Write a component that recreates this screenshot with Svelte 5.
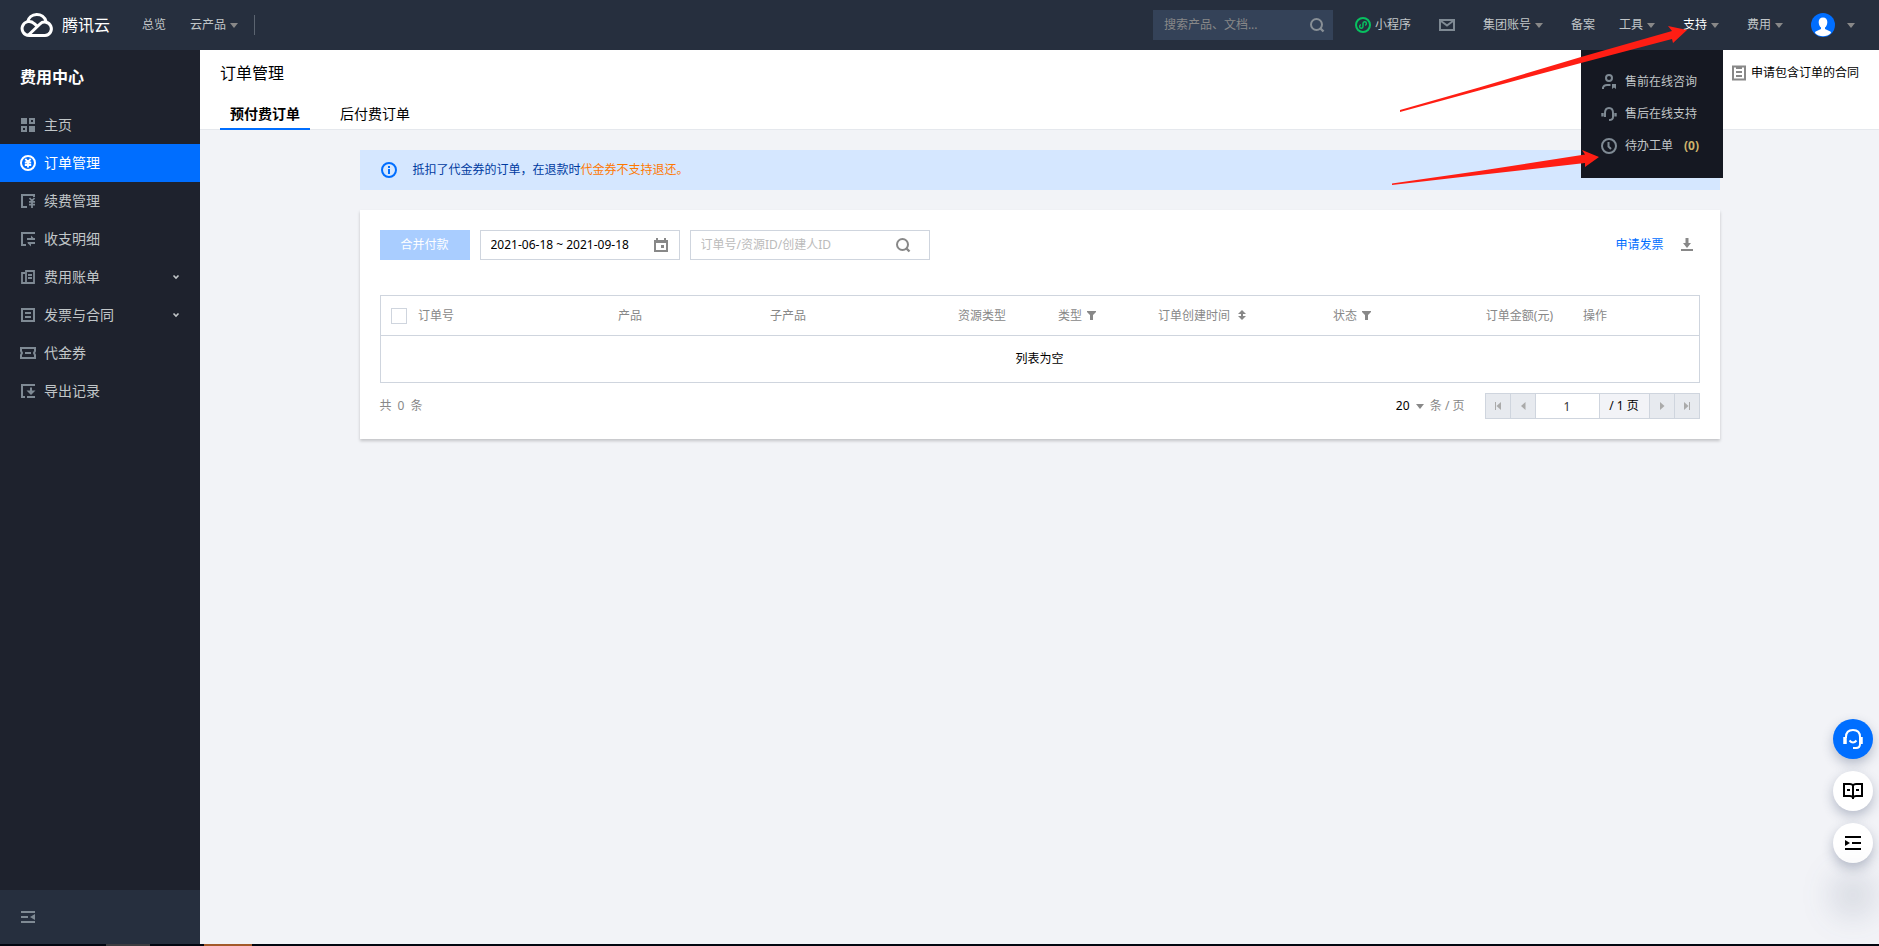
<script>
  let keyword = $state('');
  let orderQuery = $state('');
  let dateRange = $state('2021-06-18 ~ 2021-09-18');
  let page = $state('1');
  let pageSize = $state('20');
  let allChecked = $state(false);

  const menu = [
    { icon: 'home', label: '主页' },
    { icon: 'order', label: '订单管理', active: true },
    { icon: 'renew', label: '续费管理' },
    { icon: 'detail', label: '收支明细' },
    { icon: 'bill', label: '费用账单', expandable: true },
    { icon: 'invoice', label: '发票与合同', expandable: true },
    { icon: 'coupon', label: '代金券' },
    { icon: 'export', label: '导出记录' }
  ];

  const support = [
    { icon: 'person', label: '售前在线咨询' },
    { icon: 'headset', label: '售后在线支持' },
    { icon: 'clock', label: '待办工单', count: '(0)' }
  ];

  const columns = [
    { label: '订单号', width: 200 },
    { label: '产品', width: 152 },
    { label: '子产品', width: 188 },
    { label: '资源类型', width: 100 },
    { label: '类型', width: 100, tool: 'filter' },
    { label: '订单创建时间', width: 175, tool: 'sort' },
    { label: '状态', width: 110, tool: 'filter' },
    { label: '订单金额(元)', width: 140, right: true },
    { label: '操作' }
  ];
</script>

{#snippet icon(name)}
  <svg class="icon" width="16" height="16" viewBox="0 0 16 16" fill="none" stroke="currentColor" stroke-width="2" aria-hidden="true">
    {#if name === 'home'}
      <path fill="currentColor" stroke="none" fill-rule="evenodd" d="M1 1h6v6H1zM9 1h6v6H9zm2 2v2h2V3zM1 9h6v6H1zm2 2v2h2v-2zM9 9h6v6H9z" />
    {:else if name === 'order'}
      <circle cx="8" cy="8" r="7" />
      <path stroke-width="1.8" d="M5.300 3.800L8 6.800l2.700-3M8 6.500v6M4.800 7.500h6.400M4.800 10h6.400" />
    {:else if name === 'renew'}
      <path d="M7 14H2V2h12v2" />
      <path stroke-width="1.8" d="M9.500 5L12 7.800 14.500 5M12 7.500V15M9 8.800h6M9 11.600h6" />
    {:else if name === 'detail'}
      <path d="M6 14H2V2h13" />
      <path stroke-width="1.8" d="M7 8h8M8 12h7" />
      <path fill="currentColor" stroke="none" d="M11 4.500l4 4h-4zM11 15.500l-4-4h4z" />
    {:else if name === 'bill'}
      <path d="M6 14H2V4h3M6 2h8v12H6zM8 6h4M8 9h4" stroke-width="1.8" />
    {:else if name === 'invoice'}
      <path d="M2 2h12v12H2z" /><path d="M5 6h6M5 10h6" />
    {:else if name === 'contract'}
      <path d="M2 1.500h12v13H2z" /><path d="M5 3h6M5 7h6M5 11h6" />
    {:else if name === 'coupon'}
      <path d="M1 3h14v3l-1 2 1 2v3H1v-3l1-2-1-2z" /><path d="M5 8h6" />
    {:else if name === 'export'}
      <path d="M5 14H2V2h12v1M7 14h8" /><path d="M11 4.500v4" /><path fill="currentColor" stroke="none" d="M6.500 7.500L11 12l4.500-4.500z" />
    {:else if name === 'person'}
      <circle cx="8" cy="4" r="3" stroke-width="2" /><path stroke-width="2" d="M2 15v-1.500q1-2.500 4-2.500h3.500" /><path fill="currentColor" stroke="none" d="M11 10h4v5l-2-1.500-2 1.500z" />
    {:else if name === 'headset'}
      <path stroke-width="2" d="M4 11V7q0-5 4-5t4 5v4q0 3-4 3" /><path stroke-width="2.400" d="M1.500 7v3.500M14.500 7v3.500" />
    {:else if name === 'clock'}
      <circle cx="8" cy="8" r="7" stroke-width="2" /><path stroke-width="2" d="M7.500 4v4.500L10 11" />
    {:else if name === 'search'}
      <circle cx="7.500" cy="7.500" r="5.500" /><path stroke-width="2.400" d="M11 11l3.500 3.500" />
    {:else if name === 'calendar'}
      <path d="M2 4h12v10H2zM4 1v3M12 1v3" /><path stroke-width="3" d="M2 4.500h12" /><path fill="currentColor" stroke="none" d="M8 8h3v3H8z" />
    {:else if name === 'info'}
      <circle cx="8" cy="8" r="7" /><path d="M8 4v2M8 7v5" />
    {:else if name === 'mail'}
      <path d="M1 3h14v10H1z" /><path d="M2 4l6 4.500L14 4" stroke-width="2" />
    {:else if name === 'mini'}
      <circle cx="8" cy="8" r="7" /><path stroke-width="1.500" d="M6 7.800a1.700 1.700 0 1 0 2 1.700v-3a1.700 1.700 0 1 1 2 1.700" />
    {:else if name === 'download'}
      <path stroke-width="3" d="M8 1v6" /><path fill="currentColor" stroke="none" d="M4 6h8l-4 5z" /><path d="M2 13h12" />
    {:else if name === 'fold'}
      <path d="M1 3h14M1 8h7M1 13h14" /><path fill="currentColor" stroke="none" d="M15 5v6l-5-3z" />
    {/if}
  </svg>
{/snippet}

{#snippet caret()}
  <svg class="caret" width="8" height="5" viewBox="0 0 8 5" aria-hidden="true"><path fill="currentColor" d="M0 0h8L4 5z" /></svg>
{/snippet}

<div class="shell">
  <header class="topbar">
    <a class="logo" href="#home">
      <svg width="34" height="26" viewBox="0 0 34 26" fill="none" stroke="#fff" stroke-width="3" aria-hidden="true">
        <path d="M9 23.500a7 7 0 1 1 5-12l3.500 3" />
        <path d="M7.500 10a9.500 9.500 0 0 1 18.500-.5" />
        <path d="M9 23.500h16a6.700 6.700 0 1 0-5-11.500L8.500 23" />
      </svg>
      <span>腾讯云</span>
    </a>
    <nav class="primary">
      <a href="#overview">总览</a>
      <button type="button">云产品 {@render caret()}</button>
    </nav>
    <span class="divider"></span>
    <label class="site-search">
      <input type="text" bind:value={keyword} placeholder="搜索产品、文档..." aria-label="搜索产品、文档" />
      {@render icon('search')}
    </label>
    <nav class="secondary">
      <a class="mini" href="#mini"><span class="green">{@render icon('mini')}</span>小程序</a>
      <a class="mail" href="#mail" aria-label="消息">{@render icon('mail')}</a>
      <button type="button">集团账号 {@render caret()}</button>
      <a class="plain" href="#record">备案</a>
      <button type="button">工具 {@render caret()}</button>
      <div class="support">
        <button type="button" class="current" aria-expanded="true">支持 {@render caret()}</button>
        <ul class="dropdown">
          {#each support as item}
            <li>
              <a href="#support">{@render icon(item.icon)}<span>{item.label}</span>{#if item.count}<b>{item.count}</b>{/if}</a>
            </li>
          {/each}
        </ul>
      </div>
      <button type="button">费用 {@render caret()}</button>
      <button type="button" class="account" aria-label="账号">
        <svg width="24" height="24" viewBox="0 0 24 24" aria-hidden="true">
          <circle cx="12" cy="12" r="12" fill="#006eff" />
          <path fill="#fff" d="M12 4.500c3 0 4.500 2 4.300 5-.2 2.500-1 4-2.300 5v1.500l5.300 2.500q.7.400.7 1.500a11.500 11.500 0 0 1-16 0q0-1.100.7-1.500L10 16v-1.500c-1.300-1-2.100-2.500-2.300-5-.2-3 1.300-5 4.300-5z" />
        </svg>
        {@render caret()}
      </button>
    </nav>
  </header>

  <div class="body">
    <aside class="sidebar">
      <h2>费用中心</h2>
      <ul>
        {#each menu as item}
          <li>
            <a href="#menu" class:active={item.active}>
              {@render icon(item.icon)}
              <span>{item.label}</span>
              {#if item.expandable}
                <svg class="chevron" width="8" height="6" viewBox="0 0 8 6" fill="none" stroke="currentColor" stroke-width="1.600" aria-hidden="true"><path d="M1.500 1.500L4 4l2.500-2.500" /></svg>
              {/if}
            </a>
          </li>
        {/each}
      </ul>
      <div class="collapse">
        <button type="button" aria-label="收起菜单">{@render icon('fold')}</button>
      </div>
    </aside>

    <main>
      <div class="page-head">
        <div class="title-row">
          <h1>订单管理</h1>
          <a class="contract" href="#contract">{@render icon('contract')}申请包含订单的合同</a>
        </div>
        <div class="tabs" role="tablist">
          <button type="button" role="tab" class="selected" aria-selected="true">预付费订单</button>
          <button type="button" role="tab" aria-selected="false">后付费订单</button>
        </div>
      </div>

      <div class="content">
        <div class="notice">
          {@render icon('info')}
          <p>抵扣了代金券的订单，在退款时<em>代金券不支持退还。</em></p>
        </div>

        <section class="card">
          <div class="toolbar">
            <button type="button" class="merge" disabled>合并付款</button>
            <label class="field date">
              <input type="text" bind:value={dateRange} aria-label="日期范围" />
              {@render icon('calendar')}
            </label>
            <label class="field query">
              <input type="text" bind:value={orderQuery} placeholder="订单号/资源ID/创建人ID" aria-label="搜索订单" />
              {@render icon('search')}
            </label>
            <a class="apply" href="#invoice">申请发票</a>
            <button type="button" class="download" aria-label="下载">{@render icon('download')}</button>
          </div>

          <table>
            <colgroup>
              <col class="check-col" />
              {#each columns as col}
                <col style:width={col.width ? `${col.width}px` : 'auto'} />
              {/each}
            </colgroup>
            <thead>
              <tr>
                <th class="check"><input type="checkbox" bind:checked={allChecked} aria-label="全选" /></th>
                {#each columns as col}
                  <th class:right={col.right}>
                    {col.label}
                    {#if col.tool === 'filter'}
                      <svg class="tool" width="9" height="9" viewBox="0 0 9 9" aria-hidden="true"><path fill="currentColor" d="M0 0h9v1L6 4v5H3V4L0 1z" /></svg>
                    {:else if col.tool === 'sort'}
                      <svg class="tool sort" width="8" height="10" viewBox="0 0 8 10" aria-hidden="true"><path fill="currentColor" d="M4 0l4 4H5v2h3l-4 4-4-4h3V4H0z" /></svg>
                    {/if}
                  </th>
                {/each}
              </tr>
            </thead>
            <tbody>
              <tr><td colspan={columns.length + 1}>列表为空</td></tr>
            </tbody>
          </table>

          <div class="footer">
            <div class="total"><span>共</span><span>0</span><span>条</span></div>
            <div class="size">
              <label>
                <select bind:value={pageSize} aria-label="每页条数">
                  <option>20</option>
                  <option>50</option>
                </select>
                {@render caret()}
              </label>
              <span>条 / 页</span>
            </div>
            <div class="pager">
              <button type="button" disabled aria-label="首页"><svg width="8" height="8" viewBox="0 0 8 8"><path fill="currentColor" d="M1 0h1v8H1zM7 0v8L2.500 4z" /></svg></button>
              <button type="button" disabled aria-label="上一页"><svg width="8" height="8" viewBox="0 0 8 8"><path fill="currentColor" d="M6.500 0v8L2 4z" /></svg></button>
              <input type="text" bind:value={page} aria-label="页码" />
              <span>/ 1 页</span>
              <button type="button" disabled aria-label="下一页"><svg width="8" height="8" viewBox="0 0 8 8"><path fill="currentColor" d="M2 0v8l4.500-4z" /></svg></button>
              <button type="button" disabled aria-label="末页"><svg width="8" height="8" viewBox="0 0 8 8"><path fill="currentColor" d="M6 0h1v8H6zM1 0v8l4.500-4z" /></svg></button>
            </div>
          </div>
        </section>
      </div>
    </main>
  </div>

  <div class="taskbar"><span class="running"></span><span class="alerting"></span></div>

  <div class="floaters">
    <button type="button" class="blue" aria-label="在线客服">
      <svg width="20" height="20" viewBox="0 0 20 20" fill="none" stroke="currentColor" stroke-width="2" aria-hidden="true">
        <path d="M3 9V8q0-7 7-7t7 7v7q0 4-4 4h-3" /><path stroke-width="3.500" d="M2 8v7M18 8v7" /><path d="M6.500 11.500q3.500 4 7 0" />
      </svg>
    </button>
    <button type="button" aria-label="文档">
      <svg width="20" height="18" viewBox="0 0 20 18" fill="none" stroke="currentColor" stroke-width="2" aria-hidden="true">
        <path d="M10 3.500Q9 2 7 2H1v12h6q2 0 3 1.500Q11 14 13 14h6V2h-6q-2 0-3 1.500zM10 3v14M4 8h3M13 8h3" />
      </svg>
    </button>
    <button type="button" aria-label="目录">
      <svg width="16" height="16" viewBox="0 0 16 16" fill="none" stroke="currentColor" stroke-width="2" aria-hidden="true">
        <path d="M0 2h16M7 8h9M0 14h16" /><path fill="currentColor" stroke="none" d="M0 5v6l5-3z" />
      </svg>
    </button>
    <span class="haze"></span>
  </div>

  <svg class="arrows" width="500" height="200" viewBox="0 0 500 200" fill="#ff1e14" aria-hidden="true">
    <path d="M21 110L100 87.500 202 57 293 31 289 26 308 30 294 43 293 39 202 63 100 90.500 21 112z" />
    <path d="M13 183.500L100 171 206 154.500 203 150 220 157 206 167 206 163 100 175 13 185z" />
  </svg>
</div>

<style>
  :global(body) {
    margin: 0;
  }

  .shell {
    position: relative;
    display: grid;
    grid-template-rows: 50px 1fr 2px;
    height: 100vh;
    overflow: hidden;
    background: #f2f3f7;
    color: #000;
    font: 12px/18px 'Noto Sans', 'Noto Sans CJK SC', sans-serif;
  }

  .shell * {
    box-sizing: border-box;
  }

  button,
  input,
  select {
    margin: 0;
    padding: 0;
    border: 0;
    border-radius: 0;
    outline: 0;
    background: none;
    color: inherit;
    font: inherit;
  }

  a {
    color: inherit;
    text-decoration: none;
  }

  ul {
    margin: 0;
    padding: 0;
    list-style: none;
  }

  svg {
    display: block;
    flex: none;
  }

  .topbar {
    display: flex;
    align-items: center;
    padding-right: 24px;
    background: #262f3e;
    color: #c1c6c8;
  }

  .topbar a,
  .topbar button {
    display: flex;
    align-items: center;
    gap: 4px;
    white-space: nowrap;
  }

  .caret {
    color: #888;
  }

  .logo {
    margin-left: 20px;
    color: #fff;
    font-size: 16px;
    line-height: 24px;
  }

  .topbar .logo {
    gap: 8px;
  }

  .primary {
    display: flex;
    gap: 24px;
    margin-left: 32px;
  }

  .divider {
    width: 1px;
    height: 20px;
    margin-left: 16px;
    background: #5b6470;
  }

  .site-search {
    display: flex;
    align-items: center;
    width: 180px;
    height: 30px;
    margin: 0 8px 0 auto;
    padding: 0 8px 0 11px;
    background: #344258;
    color: #888f96;
  }

  .site-search input,
  .field input {
    flex: 1;
    min-width: 0;
  }

  .site-search input::placeholder {
    color: #888;
    opacity: 1;
  }

  .secondary {
    display: flex;
    align-items: center;
    height: 100%;
  }

  .secondary > a,
  .secondary > button,
  .support > button {
    height: 50px;
    padding: 0 14px;
  }

  .secondary > .plain {
    padding-right: 10px;
  }

  .green {
    color: #07c160;
  }

  .mail {
    color: #7f8a94;
  }

  .support {
    position: relative;
    z-index: 2;
  }

  .topbar .current {
    color: #fff;
  }

  .secondary > .account {
    gap: 12px;
    padding-right: 0;
  }

  .dropdown {
    position: absolute;
    top: 50px;
    right: 10px;
    width: 142px;
    padding: 16px 20px;
    background: #151822;
  }

  .dropdown a {
    gap: 8px;
    height: 32px;
  }

  .dropdown .icon {
    color: #7f8a94;
  }

  .dropdown b {
    margin-left: 3px;
    color: #cfb36b;
  }

  .body {
    display: flex;
    min-height: 0;
  }

  .sidebar {
    display: flex;
    flex-direction: column;
    flex: none;
    width: 200px;
    background: #1e222d;
    color: #c1c6c8;
    font-size: 14px;
  }

  h1,
  h2 {
    margin: 0;
    font-size: 16px;
    line-height: 24px;
  }

  h2 {
    padding: 15px 20px 17px;
    color: #fff;
  }

  .sidebar li a {
    display: flex;
    align-items: center;
    gap: 8px;
    height: 38px;
    padding: 0 20px;
  }

  .sidebar .icon {
    color: #7f8a94;
  }

  .sidebar .active,
  .sidebar .active .icon {
    color: #fff;
  }

  .sidebar .active {
    background: #006eff;
  }

  .chevron {
    margin-left: auto;
  }

  .collapse {
    display: flex;
    align-items: center;
    height: 54px;
    margin-top: auto;
    padding: 0 20px;
    background: #262f3e;
  }

  main {
    flex: 1;
    min-width: 0;
    overflow: auto;
  }

  .page-head {
    padding: 0 20px;
    border-bottom: 1px solid #e5e8ed;
    background: #fff;
  }

  .title-row {
    display: flex;
    align-items: center;
    justify-content: space-between;
    height: 46px;
  }

  h1 {
    font-weight: 400;
  }

  .contract {
    display: flex;
    align-items: center;
    gap: 4px;
  }

  .contract .icon {
    color: #888;
  }

  .tabs {
    display: flex;
    gap: 20px;
    margin-bottom: -1px;
  }

  .tabs button {
    height: 34px;
    padding: 4px 10px 0;
    border-bottom: 2px solid transparent;
    font-size: 14px;
    line-height: 20px;
  }

  .tabs .selected {
    border-color: #006eff;
    font-weight: 700;
  }

  .content {
    max-width: 1400px;
    margin: 0 auto;
    padding: 20px;
  }

  .notice {
    display: flex;
    align-items: center;
    gap: 16px;
    height: 40px;
    margin-bottom: 20px;
    padding: 0 21px;
    background: #d5e7ff;
    color: #003b9f;
  }

  .notice .icon {
    color: #006eff;
  }

  .notice p {
    margin: 0;
  }

  .notice em {
    color: #ff7800;
    font-style: normal;
  }

  .card {
    padding: 20px;
    background: #fff;
    box-shadow: 0 2px 3px rgba(0, 0, 0, 0.2);
  }

  .toolbar {
    display: flex;
    align-items: center;
    gap: 10px;
    margin-bottom: 35px;
  }

  .merge {
    width: 90px;
    height: 30px;
    background: #a9cdff;
    color: #fff;
  }

  .field {
    display: flex;
    align-items: center;
    height: 30px;
    padding: 0 10px;
    border: 1px solid #cfd5de;
  }

  .field .icon {
    color: #888;
  }

  .date {
    width: 200px;
  }

  .query {
    width: 240px;
    padding-right: 18px;
  }

  .field input::placeholder {
    color: #bbb;
    opacity: 1;
  }

  .apply {
    margin-left: auto;
    color: #006eff;
  }

  .download {
    padding: 0 5px;
    color: #888;
  }

  table {
    width: 100%;
    border: 1px solid #cfd5de;
    border-collapse: collapse;
    table-layout: fixed;
  }

  .check-col {
    width: 28px;
  }

  th {
    height: 40px;
    padding: 0 10px;
    border-bottom: 1px solid #cfd5de;
    color: #888;
    font-weight: 400;
    text-align: left;
    white-space: nowrap;
  }

  th.right {
    padding-right: 20px;
    text-align: right;
  }

  th.check {
    padding-right: 0;
  }

  .check input {
    display: block;
    width: 16px;
    height: 16px;
    border: 1px solid #cfd5de;
    appearance: none;
  }

  .check input:checked {
    background: #006eff;
  }

  .tool {
    display: inline-block;
    margin-left: 2px;
  }

  .sort {
    margin-left: 5px;
  }

  td {
    height: 47px;
    padding: 0 10px;
    text-align: center;
  }

  .footer {
    display: flex;
    align-items: center;
    margin-top: 10px;
    color: #888;
  }

  .total {
    display: flex;
    gap: 6px;
    margin-right: auto;
  }

  .size,
  .size label {
    display: flex;
    align-items: center;
    gap: 6px;
  }

  .size {
    margin-right: 20px;
  }

  .size select {
    appearance: none;
    color: #000;
  }

  .pager {
    display: flex;
    border: 1px solid #cfd5de;
    color: #000;
  }

  .pager > * {
    display: flex;
    align-items: center;
    justify-content: center;
    width: 24px;
    height: 24px;
  }

  .pager > * + * {
    border-left: 1px solid #cfd5de;
    width: 25px;
  }

  .pager button {
    background: #e7eaef;
    color: #aaa;
  }

  .pager input {
    width: 64px;
    color: #333;
    text-align: center;
  }

  .pager span {
    width: 50px;
    background: #f2f3f7;
  }

  .taskbar {
    display: flex;
    gap: 54px;
    padding-left: 106px;
    background: #020610;
  }

  .running {
    width: 44px;
    background: #3c3c40;
  }

  .alerting {
    width: 48px;
    background: #a3592a;
  }

  .floaters {
    position: absolute;
    right: 6px;
    bottom: 31px;
    display: flex;
    flex-direction: column;
    gap: 12px;
  }

  .floaters button {
    display: flex;
    align-items: center;
    justify-content: center;
    width: 40px;
    height: 40px;
    border-radius: 50%;
    background: #fff;
    box-shadow: 0 5px 12px rgba(55, 70, 105, 0.32);
  }

  .floaters .blue {
    background: #006eff;
    color: #fff;
  }

  .haze {
    height: 40px;
    border-radius: 50%;
    background: rgba(55, 70, 105, 0.18);
    filter: blur(16px);
  }

  .arrows {
    position: absolute;
    top: 0;
    right: 0;
    z-index: 3;
    pointer-events: none;
  }
</style>
